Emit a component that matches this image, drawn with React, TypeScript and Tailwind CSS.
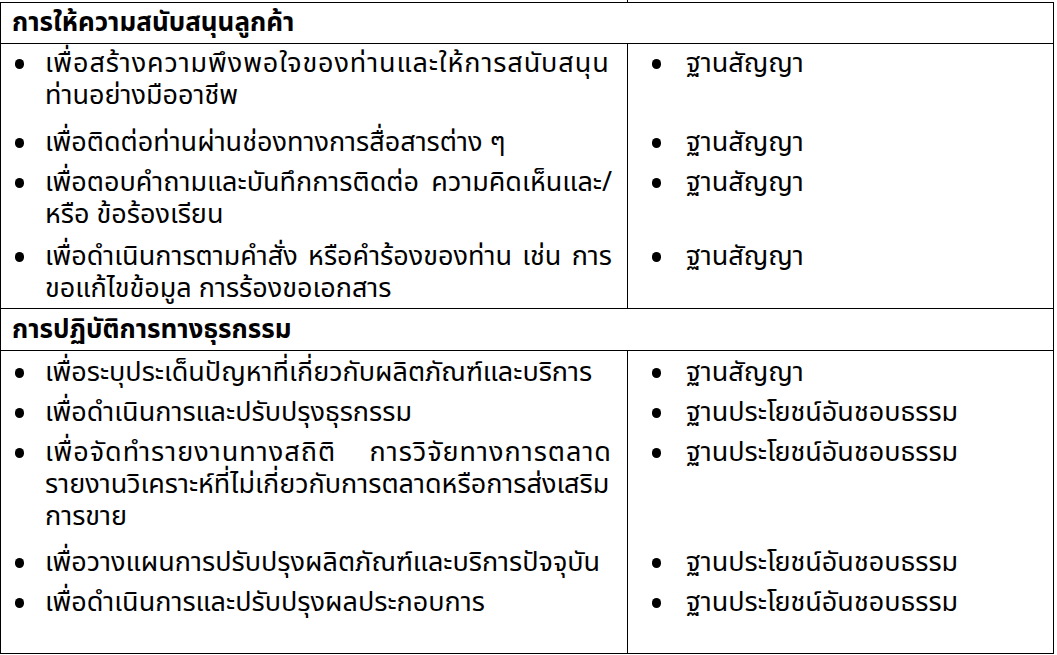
import React from "react";

type Row = {
  left: string[];
  right?: string;
  pt: string;
  pb?: string;
  track?: string;
};

const sections: { title: string; head: string; rows: Row[] }[] = [
  {
    title: "การให้ความสนับสนุนลูกค้า",
    head: "h-[41px] pt-[4px]",
    rows: [
      {
        left: ["เพื่อสร้างความพึงพอใจของท่านและให้การสนับสนุน", "ท่านอย่างมืออาชีพ"],
        right: "ฐานสัญญา",
        pt: "pt-[4px]",
        track: "tracking-[0.9px]",
      },
      {
        left: ["เพื่อติดต่อท่านผ่านช่องทางการสื่อสารต่าง ๆ"],
        right: "ฐานสัญญา",
        pt: "pt-[15px]",
      },
      {
        left: ["เพื่อตอบคำถามและบันทึกการติดต่อ ความคิดเห็นและ/", "หรือ ข้อร้องเรียน"],
        right: "ฐานสัญญา",
        pt: "pt-[8px]",
      },
      {
        left: ["เพื่อดำเนินการตามคำสั่ง หรือคำร้องของท่าน เช่น การ", "ขอแก้ไขข้อมูล การร้องขอเอกสาร"],
        right: "ฐานสัญญา",
        pt: "pt-[10px]",
        pb: "pb-[3px]",
      },
    ],
  },
  {
    title: "การปฏิบัติการทางธุรกรรม",
    head: "h-[43px] pt-[5px] border-t",
    rows: [
      {
        left: ["เพื่อระบุประเด็นปัญหาที่เกี่ยวกับผลิตภัณฑ์และบริการ"],
        right: "ฐานสัญญา",
        pt: "pt-[6px]",
      },
      {
        left: ["เพื่อดำเนินการและปรับปรุงธุรกรรม"],
        right: "ฐานประโยชน์อันชอบธรรม",
        pt: "pt-[8px]",
      },
      {
        left: [
          "เพื่อจัดทำรายงานทางสถิติ การวิจัยทางการตลาด",
          "รายงานวิเคราะห์ที่ไม่เกี่ยวกับการตลาดหรือการส่งเสริม",
          "การขาย",
        ],
        right: "ฐานประโยชน์อันชอบธรรม",
        pt: "pt-[8px]",
        track: "tracking-[1px]",
      },
      {
        left: ["เพื่อวางแผนการปรับปรุงผลิตภัณฑ์และบริการปัจจุบัน"],
        right: "ฐานประโยชน์อันชอบธรรม",
        pt: "pt-[14px]",
      },
      {
        left: ["เพื่อดำเนินการและปรับปรุงผลประกอบการ"],
        right: "ฐานประโยชน์อันชอบธรรม",
        pt: "pt-[8px]",
        pb: "pb-[34px]",
      },
    ],
  },
];

const Dot = () => (
  <span className="h-[32px] flex items-center">
    <span className="block w-[9px] h-[10px] rounded-full bg-black" />
  </span>
);

const App: React.FC = () => {
  return (
    <div className="w-[1057px] h-[655px] bg-white text-black font-['Noto_Sans_Thai','Noto_Sans_Thai_Looped','Noto_Sans','DejaVu_Sans',sans-serif] text-[27px] leading-[32px]">
      <div className="h-[2px] ml-[627px] border-l border-black" />
      <div className="w-[1054px] border border-black">
        {sections.map((section, si) => (
          <div key={si}>
            <div className={`${section.head} pl-[11px] text-[26px] font-bold border-b border-black`}>
              {section.title}
            </div>
            <div className="grid grid-cols-[626px_1fr]">
              {section.rows.map((row, ri) => (
                <React.Fragment key={ri}>
                  <div className={`flex pl-[14px] ${row.pt} ${row.pb ?? ""}`}>
                    <div className="w-[30px] shrink-0">
                      <Dot />
                    </div>
                    <div className="whitespace-nowrap">
                      {row.left.map((line, li) => (
                        <div
                          key={li}
                          className={
                            li < row.left.length - 1
                              ? `w-[567px] text-justify [text-align-last:justify] ${li === 0 ? row.track ?? "" : ""}`
                              : ""
                          }
                        >
                          {line}
                        </div>
                      ))}
                    </div>
                  </div>
                  <div className={`flex pl-[24px] border-l border-black ${row.pt} ${row.pb ?? ""}`}>
                    {row.right && (
                      <>
                        <div className="w-[34px] shrink-0">
                          <Dot />
                        </div>
                        <div className="whitespace-nowrap">{row.right}</div>
                      </>
                    )}
                  </div>
                </React.Fragment>
              ))}
            </div>
          </div>
        ))}
      </div>
    </div>
  );
};

export default App;
